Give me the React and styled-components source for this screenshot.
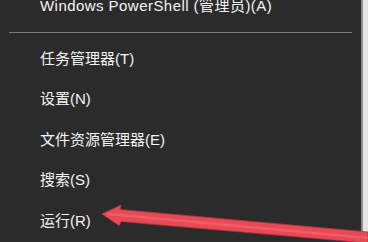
import React from 'react'
import styled, { createGlobalStyle } from 'styled-components'

const Global = createGlobalStyle`
body{
    margin: 0;
    background: #dedede;
    font-family: "Liberation Sans", "Noto Sans CJK SC", sans-serif;
}
`

const Page = styled.div`
position: relative;
width: 368px;
height: 242px;
display: flex;
overflow: hidden;
`

const Menu = styled.div`
width: 361px;
height: 100%;
background: #2b2b2b;
border-right: 2px solid #8c8c8c;
overflow: hidden;
`

const List = styled.ul`
list-style: none;
margin: -14px 0 0 0;
padding: 0;
`

const Item = styled.li`
height: 40.5px;
line-height: 40.5px;
padding-left: 40px;
font-size: 15px;
letter-spacing: ${({$wide})=>$wide ? '0.45px' : '0'};
color: #f4f4f4;
white-space: nowrap;
`

const Separator = styled.li`
height: 1px;
margin: 5px 9px 6px;
background: #7c7c7c;
`

const Rest = styled.div`
flex: 1;
background: #e4e4e4;
`

const Arrow = styled.svg`
position: absolute;
left: 0;
top: 0;
pointer-events: none;
`

const items = ['任务管理器(T)', '设置(N)', '文件资源管理器(E)', '搜索(S)', '运行(R)']

const App = () => {
  return (
    <Page>
      <Global />
      <Menu>
        <List>
          <Item $wide>Windows PowerShell (管理员)(A)</Item>
          <Separator />
          {items.map((label) => (
            <Item key={label}>{label}</Item>
          ))}
        </List>
      </Menu>
      <Rest />
      {/* red pointer drawn over the menu */}
      <Arrow width="368" height="242" viewBox="0 0 368 242">
        <polygon
          points="102,214 121,205 120,209.5 368,232 368,243 121,221.5 119,225.5"
          fill="#e84a55"
          stroke="#b9323c"
          strokeWidth="0.8"
          strokeLinejoin="round"
        />
        <polyline points="108,214 368,238" stroke="#f26a74" strokeWidth="2.5" fill="none" opacity="0.6" />
      </Arrow>
    </Page>
  )
}

export default App
